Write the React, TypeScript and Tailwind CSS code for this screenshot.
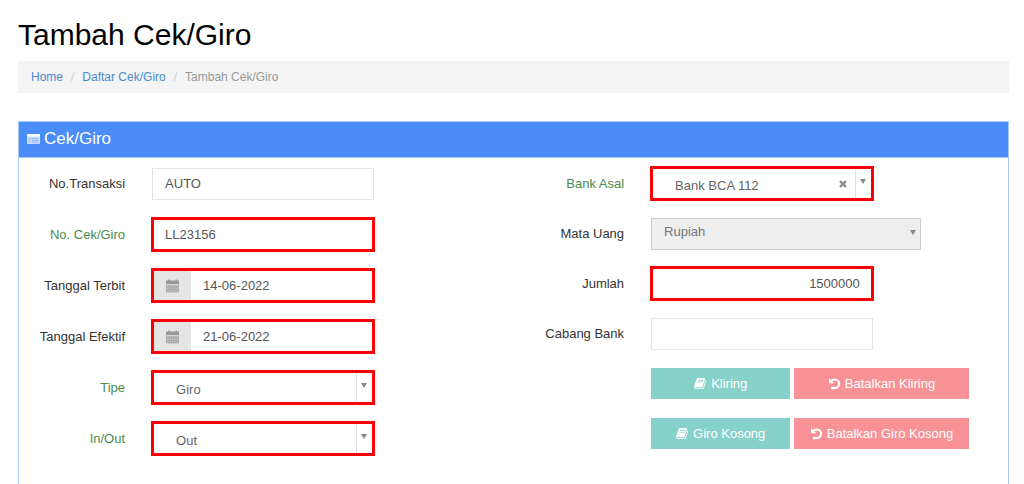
import React from "react";

const FRAME = "w-[62.5%] border-[3px] border-[#fb0007]";

function ListIcon() {
  return (
    <svg viewBox="0 0 13 12" className="h-3 w-[13px]" aria-hidden="true">
      <rect x="0" y="1" width="13" height="10" rx="1" fill="#c9dcfd" />
      <rect x="0" y="1" width="13" height="2.5" rx="1" fill="#fff" />
      <path d="M2 5.5h1.5M2 7.5h1.5M2 9.3h1.5M5 5.5h6.5M5 7.5h6.5M5 9.3h6.5" stroke="#84affb" strokeWidth="0.8" />
    </svg>
  );
}

function CalendarIcon() {
  return (
    <svg viewBox="0 0 13 14" className="h-3.5 w-[13px]" aria-hidden="true">
      <path d="M2 0.5h1.5V1.5h6V0.5H11V1.5h2V5H0V1.5h2z" fill="#999" />
      <rect x="0.5" y="5.5" width="12" height="7.5" fill="#c4c4c4" />
      <path d="M0.5 5.5v7.5h12V5.5M3 6v7M5.4 6v7M7.8 6v7M10.2 6v7M0.5 8h12M0.5 10.5h12" fill="none" stroke="#a2a2a2" strokeWidth="0.8" />
    </svg>
  );
}

function BookIcon() {
  return (
    <svg viewBox="0 0 1792 1792" className="size-[13px]" fill="currentColor" aria-hidden="true">
      <path d="M1639 478q40 57 18 129l-275 906q-19 64-76.5 107.5t-122.5 43.5h-923q-77 0-148.5-53.5t-99.5-131.5q-24-67-2-127 0-4 3-27t4-37q1-8-3-21.5t-3-19.5q2-11 8-21t16.5-23.5 16.5-23.5q23-38 45-91.5t30-91.5q3-10 .5-30t-.5-28q3-11 17-28t17-23q21-36 42-92t25-90q1-9-2.5-32t.5-28q4-13 22-30.5t22-22.5q19-26 42.5-84.5t27.5-96.5q1-8-3-25.5t-2-26.5q2-8 9-18t18-23 17-21q8-12 16.5-30.5t15-35 16-36 19.5-32 26.5-23.5 36-11.5 47.5 5.5l-1 3q38-9 51-9h761q74 0 114 56t18 130l-274 906q-36 119-71.5 153.5t-128.5 34.5h-869q-27 0-38 15-11 16-1 43 24 70 144 70h923q29 0 56-15.5t35-41.5l300-987q7-22 5-57 38 15 59 43zm-1064 2q-4 13 2 22.5t20 9.5h608q13 0 25.5-9.5t16.5-22.5l21-64q4-13-2-22.5t-20-9.5h-608q-13 0-25.5 9.5t-16.5 22.5zm-83 256q-4 13 2 22.5t20 9.5h608q13 0 25.5-9.5t16.5-22.5l21-64q4-13-2-22.5t-20-9.5h-608q-13 0-25.5 9.5t-16.5 22.5z" />
    </svg>
  );
}

function UndoIcon() {
  return (
    <svg viewBox="0 0 13 13" className="size-[13px]" aria-hidden="true">
      <path d="M1 1v5.2h5.2z" fill="currentColor" />
      <path d="M3 4.2C4.2 3 5.4 2.5 6.8 2.5a4.3 4.3 0 0 1 0 8.6H3" fill="none" stroke="currentColor" strokeWidth="2.1" />
    </svg>
  );
}

function Arrow() {
  return (
    <svg viewBox="0 0 6 5" className="h-[5px] w-1.5" aria-hidden="true">
      <path d="M0 0h6L3 5z" fill="#888" />
    </svg>
  );
}

function Row({ id, label, green, children }: { id?: string; label?: string; green?: boolean; children: React.ReactNode }) {
  return (
    <div className="grid h-[35px] grid-cols-[107fr_361fr] items-center gap-[26px]">
      {label ? (
        <label htmlFor={id} className={green ? "text-right whitespace-nowrap text-[#4a8a4b]" : "text-right whitespace-nowrap text-[#333]"}>
          {label}
        </label>
      ) : (
        <span />
      )}
      {children}
    </div>
  );
}

function PlainInput({ id, value }: { id: string; value?: string }) {
  return (
    <div className="w-[62.5%] px-px">
      <input id={id} defaultValue={value} className="block h-8 w-full border border-[#e5e5e5] bg-white px-3 text-[#555] outline-none" />
    </div>
  );
}

function DateInput({ id, value }: { id: string; value: string }) {
  return (
    <div className={`${FRAME} flex h-[35px]`}>
      <span className="flex w-[37px] items-center justify-center bg-[#e5e5e5]">
        <CalendarIcon />
      </span>
      <input id={id} defaultValue={value} className="min-w-0 flex-1 bg-white px-3 text-[#555] outline-none" />
    </div>
  );
}

function FramedSelect({ id, value, clearable }: { id: string; value: string; clearable?: boolean }) {
  return (
    <div className={`${FRAME} relative h-[35px]`}>
      <select id={id} className="block h-full w-full appearance-none bg-white pt-[5px] pr-10 pl-[22px] text-[#666] outline-none">
        <option>{value}</option>
      </select>
      {clearable && (
        <button type="button" aria-label="Hapus pilihan" className="absolute inset-y-0 right-6 flex items-center text-[#888]">
          <svg viewBox="0 0 8 8" className="size-2" aria-hidden="true">
            <path d="M1 1l6 6M7 1L1 7" stroke="currentColor" strokeWidth="2.2" />
          </svg>
        </button>
      )}
      <span className="pointer-events-none absolute inset-y-0 right-0 flex w-4 justify-center border-l border-[#e0e0e0] pt-2.5">
        <Arrow />
      </span>
    </div>
  );
}

function ActionButtons({ primary, cancel }: { primary: string; cancel: string }) {
  const base = "flex h-[31px] items-center justify-center gap-1 whitespace-nowrap text-white";
  return (
    <div className="grid w-[89%] grid-cols-[139fr_174fr] gap-1 pl-px">
      <button type="button" className={`${base} bg-[#87d1cb]`}>
        <BookIcon />
        {primary}
      </button>
      <button type="button" className={`${base} bg-[#f99297]`}>
        <UndoIcon />
        {cancel}
      </button>
    </div>
  );
}

export default function App() {
  return (
    <main className="flex min-h-screen flex-col bg-white pr-[15px] pl-[18px] font-['Liberation_Sans',Arial,sans-serif] text-[13px] leading-5">
      <h1 className="pt-[17px] text-[30px] leading-9 text-black">Tambah Cek/Giro</h1>
      <nav aria-label="Breadcrumb" className="mt-2 flex h-8 items-center bg-[#f4f4f4] px-[13px] text-xs">
        <a href="#home" className="text-[#4a8bcb]">Home</a>
        <span className="px-2 text-[#ccc]">/</span>
        <a href="#daftar" className="text-[#4a8bcb]">Daftar Cek/Giro</a>
        <span className="px-2 text-[#ccc]">/</span>
        <span className="text-[#999]">Tambah Cek/Giro</span>
      </nav>

      <section className="mt-7 flex flex-1 flex-col border border-b-0 border-[#a9c8fb]">
        <h2 className="flex h-[35px] items-center gap-1 bg-[#4b8df8] px-2 pb-0.5 text-[17px] text-white">
          <ListIcon />
          Cek/Giro
        </h2>
        <form className="grid grid-cols-2 items-start gap-x-[9px] border-t border-[#a9c8fb] pt-2 pb-7">
          <div className="flex flex-col gap-4">
            <Row id="no-transaksi" label="No.Transaksi">
              <PlainInput id="no-transaksi" value="AUTO" />
            </Row>
            <Row id="no-cek" label="No. Cek/Giro" green>
              <input id="no-cek" defaultValue="LL23156" className={`${FRAME} h-[35px] bg-white px-[11px] text-[#555] outline-none`} />
            </Row>
            <Row id="terbit" label="Tanggal Terbit">
              <DateInput id="terbit" value="14-06-2022" />
            </Row>
            <Row id="efektif" label="Tanggal Efektif">
              <DateInput id="efektif" value="21-06-2022" />
            </Row>
            <Row id="tipe" label="Tipe" green>
              <FramedSelect id="tipe" value="Giro" />
            </Row>
            <Row id="in-out" label="In/Out" green>
              <FramedSelect id="in-out" value="Out" />
            </Row>
          </div>
          <div className="flex flex-col gap-[15px]">
            <Row id="bank-asal" label="Bank Asal" green>
              <FramedSelect id="bank-asal" value="Bank BCA 112" clearable />
            </Row>
            <Row id="mata-uang" label="Mata Uang">
              <div className="relative w-[76%] px-px">
                <select id="mata-uang" disabled className="block h-8 w-full appearance-none border border-[#ccc] bg-[#eee] px-3 pb-1 text-[#777] opacity-100">
                  <option>Rupiah</option>
                </select>
                <span className="pointer-events-none absolute top-3 right-1.5">
                  <Arrow />
                </span>
              </div>
            </Row>
            <Row id="jumlah" label="Jumlah">
              <input id="jumlah" defaultValue="1500000" className={`${FRAME} h-[35px] bg-white px-[11px] text-right text-[#555] outline-none`} />
            </Row>
            <Row id="cabang" label="Cabang Bank">
              <PlainInput id="cabang" />
            </Row>
            <Row>
              <ActionButtons primary="Kliring" cancel="Batalkan Kliring" />
            </Row>
            <Row>
              <ActionButtons primary="Giro Kosong" cancel="Batalkan Giro Kosong" />
            </Row>
          </div>
        </form>
      </section>
    </main>
  );
}
